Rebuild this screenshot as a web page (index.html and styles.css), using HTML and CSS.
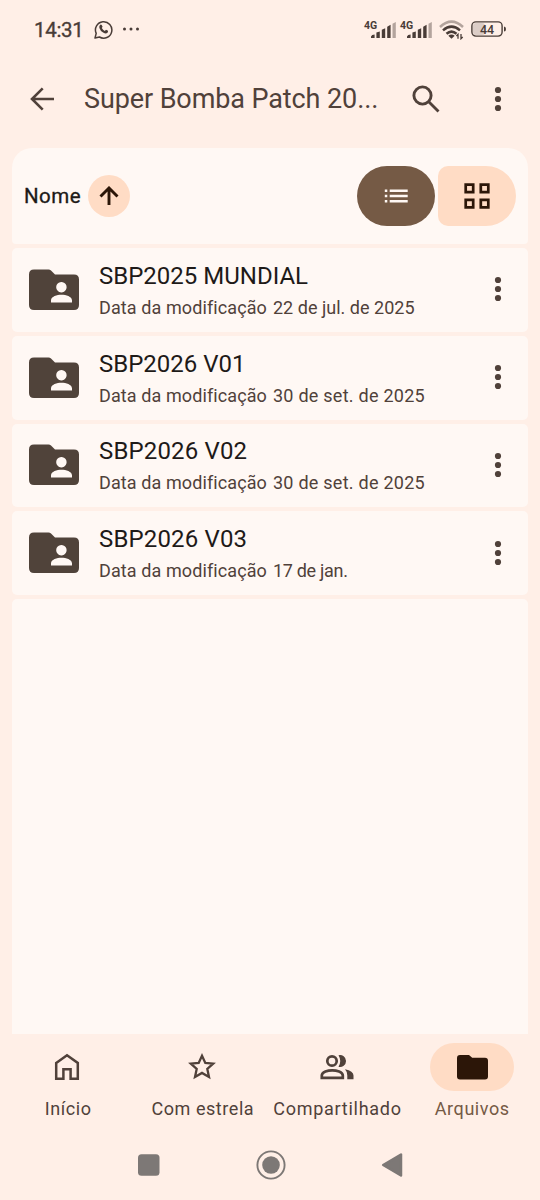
FILE: index.html
```html
<!DOCTYPE html>
<html lang="pt-BR">
<head>
<meta charset="utf-8">
<title>Arquivos</title>
<link rel="stylesheet" href="styles.css">
</head>
<body>
<svg class="defs" width="0" height="0">
  <defs>
    <symbol id="more" viewBox="0 0 8 26"><circle cx="4" cy="4" r="3.1"/><circle cx="4" cy="13" r="3.1"/><circle cx="4" cy="22" r="3.1"/></symbol>
    <symbol id="folder" viewBox="0 0 50 41"><path fill-rule="evenodd" d="M5 0.5H19.500Q21 0.500 22 1.500L26 5.500H45Q50 5.500 50 10.500V36Q50 41 45 41H5Q0 41 0 36V5.500Q0 0.500 5 0.500ZM32.400 13a5.200 5.200 0 1 0 .01 0ZM22 33.500H43V31.500C43 27.500 37 25.800 32.500 25.800S22 27.500 22 31.500Z"/></symbol>
    <symbol id="signal" viewBox="0 0 25 16"><path d="M0 16v-1.600q.6-2 3.600-2V16ZM5.400 16v-5.400l3.400-1.200V16ZM10.800 16V7.800l3.400-1.500V16ZM16.200 16V4.800l3.400-2V16Z"/><path opacity=".42" d="M21.500 16V1.800L24.800 0V16Z"/></symbol>
  </defs>
</svg>
<div class="screen">
  <header class="status">
    <span class="clock">14:31</span>
    <svg class="whatsapp" viewBox="0 0 19 19"><path d="M1 18l1.200-4.600A8.200 8.200 0 1 1 5.400 17Z" fill="none" stroke="currentColor" stroke-width="1.500" stroke-linejoin="round"/><path fill="currentColor" d="M6 5q1-1 1.700 0l.9 1.700-.8 1.200q1 2 3 3l1.200-1.100 2 1q.3 1.300-.8 2.200-1.500 1-4.100-.5Q6.200 10.800 5.400 8 5 6.200 6 5Z"/></svg>
    <svg class="dots" viewBox="0 0 18 4" fill="currentColor"><circle cx="2.500" cy="2" r="1.500"/><circle cx="9" cy="2" r="1.500"/><circle cx="15.500" cy="2" r="1.500"/></svg>
    <span class="net">4G</span><svg class="signal"><use href="#signal"/></svg>
    <span class="net net-second">4G</span><svg class="signal"><use href="#signal"/></svg>
    <svg class="wifi" viewBox="0 0 25 20" fill="none" stroke="currentColor" stroke-width="2.500"><path opacity=".42" d="M1 7Q12.500-3.800 24 7"/><path d="M4 10.400Q12.500 2.800 21 10.400M7.500 13.800Q12.500 9.500 17.500 13.800"/><path fill="currentColor" stroke="none" d="M9.300 15.800Q12.500 13.400 15.700 15.800L12.500 18.800Z"/><path stroke-width="1.300" d="M19 18.800v-4.500l-1.600 1.700M22 14v4.700l1.700-1.700"/></svg>
    <svg class="battery" viewBox="0 0 36 16"><rect x="2" y="2" width="12" height="12" rx="3" fill="#dccdc7"/><rect x=".9" y=".9" width="30.200" height="14.200" rx="4" fill="none" stroke="currentColor" stroke-width="1.400"/><path fill="currentColor" d="M33 5.500q2 0 2 2.500t-2 2.500Z"/><text class="level" x="16" y="12.600" text-anchor="middle">44</text></svg>
  </header>

  <div class="appbar">
    <svg class="back" viewBox="0 0 24 24" fill="none" stroke="currentColor" stroke-width="2.600"><path d="M24 12H2.500M12.700 1.300L2 12l10.700 10.700"/></svg>
    <h1 class="title">Super Bomba Patch 20...</h1>
    <svg class="search" viewBox="0 0 28 28" fill="none" stroke="currentColor" stroke-width="2.900"><circle cx="10.500" cy="10.500" r="8.600"/><path d="M16.500 16.500L26.500 26.500"/></svg>
    <svg class="more"><use href="#more"/></svg>
  </div>

  <main class="list">
    <section class="sortbar">
      <span class="sort">Nome</span>
      <span class="order"><svg viewBox="0 0 20 20" fill="none" stroke="currentColor" stroke-width="2.900"><path d="M10 19V2.500M1.500 10.500L10 2l8.500 8.500"/></svg></span>
      <span class="toggle toggle-list"><svg viewBox="0 0 24 14" fill="currentColor"><path d="M.8 .5h2.500V3H.8ZM.8 5.800h2.500v2.500H.8ZM.8 11h2.500v2.500H.8ZM5.700 .5h18V3h-18ZM5.700 5.800h18v2.500h-18ZM5.700 11h18v2.500h-18Z"/></svg></span>
      <span class="toggle toggle-grid"><svg viewBox="0 0 26 26" fill="none" stroke="currentColor" stroke-width="2.700"><path d="M1.700 1.700h7.500v7.500H1.700ZM16.800 1.700h7.500v7.500h-7.500ZM1.700 16.800h7.500v7.500H1.700ZM16.800 16.800h7.500v7.500h-7.500Z"/></svg></span>
    </section>
    <article class="row"><svg class="folder"><use href="#folder"/></svg><div class="info"><div class="name">SBP2025 MUNDIAL</div><div class="meta"><span>Data da modificação</span><span class="date">22 de jul. de 2025</span></div></div><svg class="more"><use href="#more"/></svg></article>
    <article class="row"><svg class="folder"><use href="#folder"/></svg><div class="info"><div class="name">SBP2026 V01</div><div class="meta"><span>Data da modificação</span><span class="date date-wide">30 de set. de 2025</span></div></div><svg class="more"><use href="#more"/></svg></article>
    <article class="row"><svg class="folder"><use href="#folder"/></svg><div class="info"><div class="name name-wide">SBP2026 V02</div><div class="meta"><span>Data da modificação</span><span class="date date-wide">30 de set. de 2025</span></div></div><svg class="more"><use href="#more"/></svg></article>
    <article class="row"><svg class="folder"><use href="#folder"/></svg><div class="info"><div class="name name-wide">SBP2026 V03</div><div class="meta"><span>Data da modificação</span><span class="date date-tight">17 de jan.</span></div></div><svg class="more"><use href="#more"/></svg></article>
    <div class="rest"></div>
  </main>

  <nav class="tabs">
    <div class="tab"><span class="pill"><svg width="26" height="28" viewBox="0 0 26 28" fill="none" stroke="currentColor" stroke-width="2.500"><path d="M2.200 10L13 2.200 23.800 10V25.700H16.600V16.200H9.400V25.700H2.200Z"/></svg></span><span class="label">Início</span></div>
    <div class="tab"><span class="pill"><svg width="30" height="30" viewBox="0 0 30 30" fill="none" stroke="currentColor" stroke-width="2.300"><path d="M15 3.800L18.300 11 26.200 11.700 20.300 17 22 25 15 20.900 8 25 9.700 17 3.800 11.700 11.700 11Z"/></svg></span><span class="label">Com estrela</span></div>
    <div class="tab"><span class="pill"><svg width="34" height="26" viewBox="0 0 34 26"><g fill="none" stroke="currentColor" stroke-width="2.700"><circle cx="12" cy="7" r="4.700"/><path d="M1.800 23.800V21.500C1.800 17.800 8 16.300 12.200 16.300S22.800 17.800 22.800 21.500V23.800Z"/></g><path fill="currentColor" d="M18.500 1.200A6 6 0 1 1 18.500 12.800Q22 7 18.500 1.200ZM25 15.300Q33.500 17 33.500 21.500V25.200H27.300V21.500Q27.300 17.700 25 15.300Z"/></svg></span><span class="label label-wide">Compartilhado</span></div>
    <div class="tab active"><span class="pill"><svg width="31" height="25" viewBox="0 0 31 25" fill="currentColor"><path d="M3 0H12L15.200 2.800H28Q31 2.800 31 5.800V21.500Q31 24.500 28 24.500H3Q0 24.500 0 21.500V3Q0 0 3 0Z"/></svg></span><span class="label">Arquivos</span></div>
  </nav>

  <footer class="system">
    <svg width="22" height="22"><rect width="21.500" height="21.500" y=".2" rx="3.500" fill="#7d7876"/></svg>
    <svg width="30" height="30" viewBox="0 0 30 30"><circle cx="15" cy="15" r="13.600" fill="none" stroke="#7d7876" stroke-width="1.900"/><circle cx="15" cy="15" r="8.800" fill="#7d7876"/></svg>
    <svg width="22" height="26" viewBox="0 0 22 26"><path d="M20 2.500V23.500L2.200 13Z" fill="#7d7876" stroke="#7d7876" stroke-width="2.500" stroke-linejoin="round"/></svg>
  </footer>
</div>
</body>
</html>
```
FILE: styles.css
```css
* { box-sizing: border-box; }
body { margin: 0; background: #ffefe7; color: #50413a; font-family: Roboto, "Liberation Sans", sans-serif; }
.defs { display: block; }
.screen { width: 540px; height: 1200px; display: flex; flex-direction: column; overflow: hidden; }
svg { flex: none; }

.status { height: 58px; padding: 1px 33px 0 34px; display: flex; align-items: center; color: #493c37; }
.clock { font-size: 20.500px; font-weight: 400; letter-spacing: -.3px; width: 60px; -webkit-text-stroke: .35px currentColor; }
.whatsapp { width: 19px; height: 19px; }
.dots { width: 18px; height: 4px; margin: -2px 0 0 9px; }
.net { font-size: 10.500px; font-weight: 700; line-height: 12px; margin-left: auto; padding-bottom: 7px; width: 13px; white-space: nowrap; }
.net-second { margin-left: 4px; }
.signal { width: 25px; height: 16px; margin-left: -6px; fill: currentColor; }
.wifi { width: 25px; height: 20px; margin-left: 7px; }
.battery { width: 36px; height: 16px; margin: -2px 0 0 7px; }
.level { font: 500 12.500px Roboto, sans-serif; fill: currentColor; }

.appbar { height: 90px; padding: 0 38px 8px 30px; display: flex; align-items: center; }
.back { width: 24px; height: 24px; }
.title { margin: 0 0 0 30px; width: 328px; font-size: 27px; line-height: 34px; font-weight: 400; letter-spacing: -.1px; white-space: nowrap; }
.search { width: 28px; height: 28px; }
.more { width: 8px; height: 26px; margin-left: auto; fill: currentColor; }

.list { flex: 1; margin: 0 12px; display: flex; flex-direction: column; gap: 4px; }
.sortbar { height: 96px; padding: 0 12px; border-radius: 20px 20px 4px 4px; background: #fff8f4; display: flex; align-items: center; color: #201a17; }
.sort { width: 64px; font-size: 20.500px; font-weight: 400; letter-spacing: .5px; -webkit-text-stroke: .3px currentColor; }
.order { width: 42px; height: 42px; border-radius: 50%; background: #ffdcc5; display: grid; place-items: center; color: #2c1608; }
.order svg { width: 20px; height: 20px; }
.toggle { width: 78px; height: 60px; display: grid; place-items: center; }
.toggle-list { margin-left: auto; border-radius: 30px; background: #755a45; color: #fff8f4; }
.toggle-list svg { width: 24px; height: 14px; }
.toggle-grid { margin-left: 3px; border-radius: 10px 30px 30px 10px; background: #ffdcc5; color: #2c1608; }
.toggle-grid svg { width: 26px; height: 26px; }
.row { height: 83.750px; padding: 0 26px 1px 17px; border-radius: 5px; background: #fff8f4; display: flex; align-items: center; }
.folder { width: 50px; height: 41px; fill: #50433a; }
.info { margin-left: 20px; padding-top: 3px; }
.name { font-size: 24px; line-height: 32px; font-weight: 400; color: #1e1a18; white-space: nowrap; }
.name-wide { letter-spacing: .15px; }
.meta { font-size: 18px; line-height: 28px; font-weight: 400; margin-top: 2px; display: flex; white-space: nowrap; gap: 6px; letter-spacing: .1px; }
.date { letter-spacing: .02px; }
.date-wide { letter-spacing: .25px; }
.date-tight { letter-spacing: -.3px; }
.rest { flex: 1; border-radius: 5px 5px 0 0; background: #fff8f4; }

.tabs { height: 96px; display: grid; grid-template-columns: repeat(4, 134.700px); padding: 9px 0 0 .800px; }
.tab { display: flex; flex-direction: column; align-items: center; }
.pill { width: 84px; height: 48px; border-radius: 24px; display: grid; place-items: center; }
.tab:not(.active) svg { margin-right: 1.500px; }
.active .pill { background: #ffdcc5; color: #2c1608; }
.label { font-size: 18px; line-height: 24px; margin-top: 6px; letter-spacing: .55px; white-space: nowrap; }
.label-wide { letter-spacing: .72px; }
.active .label { color: #755a45; }
.system { height: 70px; padding: 0 137px 0 138px; display: flex; align-items: center; justify-content: space-between; }
```
